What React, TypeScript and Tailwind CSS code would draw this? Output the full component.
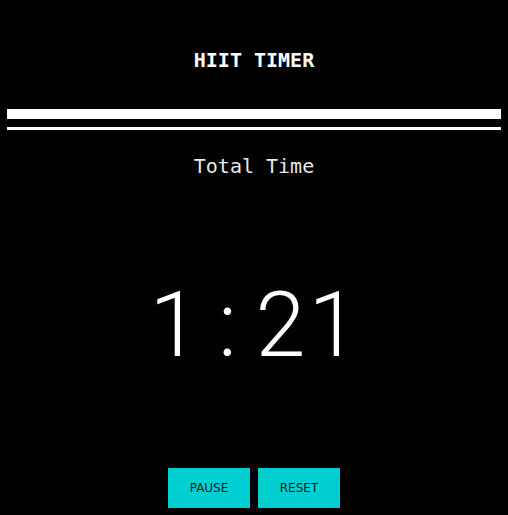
import React from "react";

const mono = "font-['DejaVu_Sans_Mono','Liberation_Mono',monospace]";

const Digit: React.FC<{ ch: string }> = ({ ch }) => (
  <span className="inline-block w-[53px] text-center">{ch}</span>
);

const App: React.FC = () => {
  const time = "1:21";

  return (
    <div className="min-h-[515px] w-full bg-black text-white flex flex-col items-center">
      {/* Title */}
      <h1 className={`${mono} mt-[46px] text-[20px] leading-[28px] font-bold tracking-normal`}>
        HIIT TIMER
      </h1>

      {/* Progress bars */}
      <div className="w-full px-[7px] mt-[35px] flex flex-col gap-[8px]">
        <div className="h-[10px] bg-white" />
        <div className="h-[3px] bg-white" />
      </div>

      {/* Label */}
      <p className={`${mono} mt-[22px] text-[20px] leading-[28px] text-[#e8e8e8]`}>
        Total Time
      </p>

      {/* Clock */}
      <div className="mt-[101px] h-[90px] flex font-['Roboto',sans-serif] font-light text-[90px] leading-none">
        {time.split("").map((c, i) => (
          <Digit key={i} ch={c} />
        ))}
      </div>

      {/* Controls */}
      <div className="mt-[97px] flex gap-[8px]">
        <button className="w-[82px] h-[40px] bg-[#00ced1] text-[#0c2426] text-[12px] font-['DejaVu_Sans',sans-serif]">
          PAUSE
        </button>
        <button className="w-[82px] h-[40px] bg-[#00ced1] text-[#0c2426] text-[12px] font-['DejaVu_Sans',sans-serif]">
          RESET
        </button>
      </div>
    </div>
  );
};

export default App;
